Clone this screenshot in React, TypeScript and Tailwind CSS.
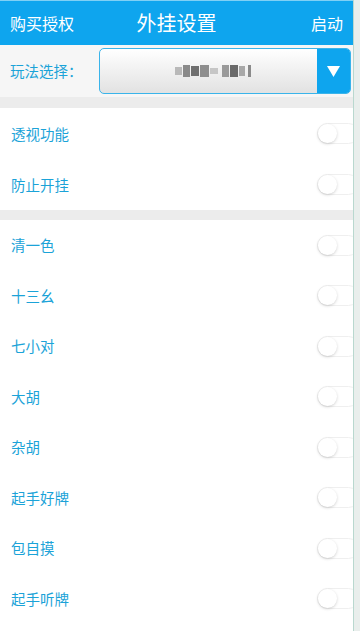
import React, { useState } from 'react';

const font = { fontFamily: '"Noto Sans CJK SC", "Noto Sans", sans-serif' };

const Toggle: React.FC<{ on: boolean; onClick: () => void }> = ({ on, onClick }) => (
  <button onClick={onClick} className="relative -mr-[6px] h-[21px] w-[42px] shrink-0">
    <span className={`absolute inset-0 rounded-full border ${on ? 'bg-[#4cd964] border-[#4cd964]' : 'bg-white border-[#efefef]'}`} />
    <span
      className={`absolute top-[1px] h-[19px] w-[19px] rounded-full bg-white shadow-[0_1px_3px_rgba(0,0,0,0.18)] ${on ? 'left-[22px]' : 'left-[1px]'}`}
    />
  </button>
);

const Row: React.FC<{ label: string; on: boolean; onClick: () => void; h: string }> = ({ label, on, onClick, h }) => (
  <div className={`flex ${h} items-center justify-between pl-[11px]`}>
    <span className="text-[14.5px] text-[#1ba3d8]">{label}</span>
    <Toggle on={on} onClick={onClick} />
  </div>
);

const App: React.FC = () => {
  const [state, setState] = useState<Record<string, boolean>>({});
  const flip = (k: string) => setState((s) => ({ ...s, [k]: !s[k] }));

  const top = ['透视功能', '防止开挂'];
  const rest = ['清一色', '十三幺', '七小对', '大胡', '杂胡', '起手好牌', '包自摸', '起手听牌'];

  return (
    <div className="flex h-[631px] w-[360px] overflow-hidden bg-[#e9eeec]" style={font}>
      <div className="flex w-[353px] shrink-0 flex-col overflow-hidden bg-white">
        {/* Header */}
        <div className="flex h-[45px] shrink-0 items-center justify-between border-t border-[#7fd0f5] bg-[#0ea5ee] px-[10px] text-white">
          <span className="w-[80px] text-[16px]">购买授权</span>
          <span className="text-[20px]">外挂设置</span>
          <span className="w-[80px] text-right text-[16px]">启动</span>
        </div>

        {/* Mode select */}
        <div className="flex h-[52px] shrink-0 items-center bg-[#f6f6f6] pl-[10px] pr-[2px]">
          <span className="w-[89px] text-[14.5px] text-[#1ba3d8]">玩法选择：</span>
          <div className="flex h-[46px] flex-1 overflow-hidden rounded-[5px] border border-[#3ab4ea] bg-gradient-to-b from-white to-[#e2e2e2]">
            <div className="flex flex-1 items-center justify-center pl-[8px]">
              <div className="flex items-center gap-[1px]">
                <span className="h-[8px] w-[7px] bg-[#b9b9b9]" />
                <span className="h-[12px] w-[7px] bg-[#8a8a8a]" />
                <span className="h-[10px] w-[8px] bg-[#6f6f6f]" />
                <span className="h-[12px] w-[9px] bg-[#8e8e8e]" />
                <span className="h-[6px] w-[8px] bg-[#c6c6c6]" />
                <span className="ml-[3px] h-[12px] w-[7px] bg-[#9a9a9a]" />
                <span className="h-[12px] w-[8px] bg-[#6a6a6a]" />
                <span className="h-[10px] w-[6px] bg-[#a8a8a8]" />
                <span className="ml-[2px] h-[12px] w-[3px] bg-[#8b8b8b]" />
              </div>
            </div>
            <div className="flex w-[33px] items-center justify-center bg-[#0ea5ee]">
              <svg width="13" height="11" viewBox="0 0 13 11">
                <path d="M0 0 H13 L6.5 11 Z" fill="white" />
              </svg>
            </div>
          </div>
        </div>

        <div className="h-[11px] shrink-0 bg-[#ececec]" />

        <div className="shrink-0">
          {top.map((t) => (
            <Row key={t} h="h-[51px]" label={t} on={!!state[t]} onClick={() => flip(t)} />
          ))}
        </div>

        <div className="h-[10px] shrink-0 bg-[#ececec]" />

        <div className="shrink-0">
          {rest.map((t) => (
            <Row key={t} h="h-[50.5px]" label={t} on={!!state[t]} onClick={() => flip(t)} />
          ))}
        </div>
      </div>
      <div className="w-[7px] border-l border-[#b9d8cf] bg-[#e9eeec]" />
    </div>
  );
};

export default App;
